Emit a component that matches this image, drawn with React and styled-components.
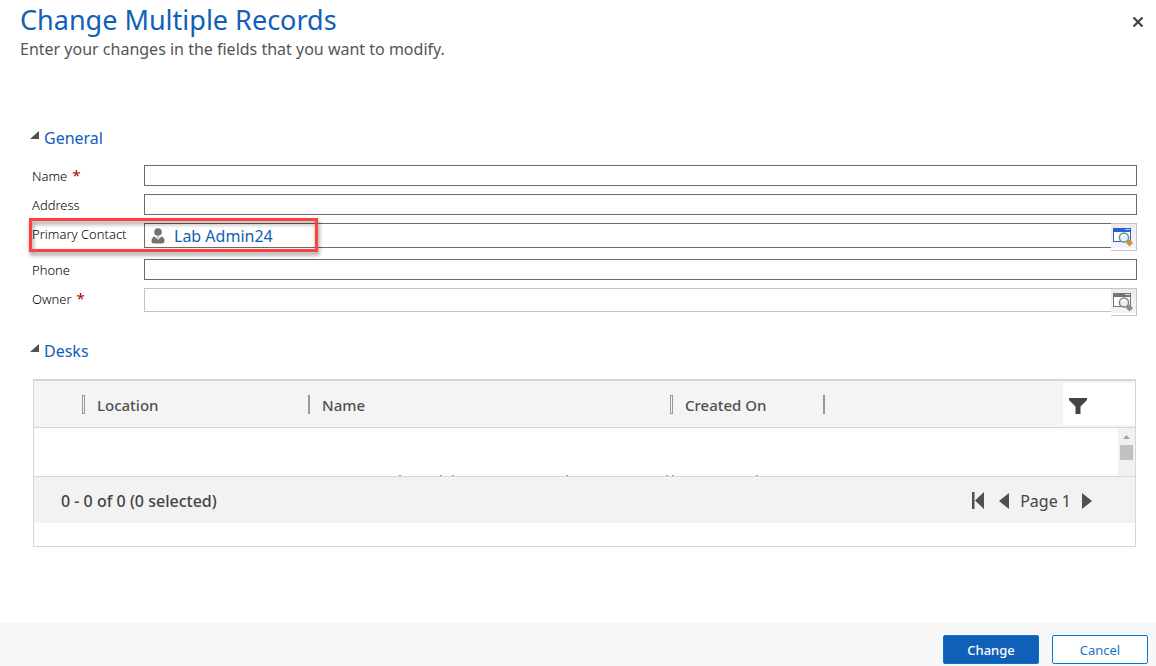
import React from "react";
import styled, { createGlobalStyle } from "styled-components";

const GlobalStyle = createGlobalStyle`
  * { box-sizing: border-box; }
  body {
    margin: 0;
    background: #fff;
    color: #444;
    font-family: "Noto Sans", "Open Sans", sans-serif;
    font-size: 13px;
  }
  button, input { font: inherit; color: inherit; }
`;

const Dialog = styled.div`
  display: flex;
  flex-direction: column;
  min-height: 100vh;
`;

const Header = styled.header`
  display: flex;
  justify-content: space-between;
  padding: 2px 8px 0 20px;
`;

const Title = styled.h1`
  margin: 0;
  color: #1160b7;
  font-size: 27px;
  font-weight: 400;
  line-height: 36px;
`;

const Subtitle = styled.p`
  margin: 0;
  color: #555;
  font-size: 16px;
  font-weight: 400;
  line-height: 22px;
`;

const IconButton = styled.button`
  display: flex;
  align-items: center;
  justify-content: center;
  width: 20px;
  height: 20px;
  padding: 0;
  border: 0;
  background: none;
`;

const CloseButton = styled(IconButton)`
  margin-top: 10px;
`;

const Content = styled.main`
  flex: 1;
  padding: 64px 19px 76px 30px;
`;

const Toggle = styled.button`
  display: flex;
  align-items: center;
  gap: 5px;
  padding: 0;
  border: 0;
  background: none;
  color: #1160b7;
  font-size: 16px;
  font-weight: 400;
  line-height: 28px;
`;

const SectionTitle = styled.h2`
  margin: 0;
  font-weight: 400;
`;

const Fields = styled.div`
  display: flex;
  flex-direction: column;
  gap: 8px;
  padding: 13px 0 21px 2px;
`;

const Field = styled.div`
  position: relative;
  display: flex;
  align-items: flex-start;
`;

const Label = styled.label`
  flex: none;
  width: 112px;
  height: 21px;
  color: #000;
  font-size: 13px;
  font-weight: 300;
  line-height: 23px;
`;

const Required = styled.span`
  margin-left: 5px;
  color: #b00000;
  font-size: 15px;
  font-weight: 400;
  line-height: 16px;
`;

const TextInput = styled.input`
  flex: 1;
  min-width: 0;
  height: 21px;
  padding: 0 4px;
  border: 1px solid #6b6b6b;
  border-radius: 0;
  background: #fff;
  outline: none;
`;

const Lookup = styled.div`
  display: flex;
  flex: 1;
  align-items: flex-start;
`;

const LookupBox = styled.div`
  display: flex;
  flex: 1;
  align-items: center;
  gap: 8px;
  height: ${(p) => (p.$muted ? 24 : 25)}px;
  padding-left: 6px;
  border: 1px solid ${(p) => (p.$muted ? "#c4c4c4" : "#6b6b6b")};
  border-right: 0;
`;

const LookupInput = styled.input`
  flex: 1;
  min-width: 0;
  height: 20px;
  padding: 0;
  border: 0;
  outline: none;
`;

const RecordLink = styled.a`
  color: #1160b7;
  font-size: 16px;
  font-weight: 400;
  line-height: 22px;
  text-decoration: none;
`;

const LookupButton = styled.button`
  display: flex;
  width: 26px;
  height: 28px;
  padding: 0;
  border: solid #c4c4c4;
  border-width: 1px 1px 1px 0;
  background: linear-gradient(#ededf0, #f3f3fb 24px, #fff 24px);
`;

const Highlight = styled.div`
  position: absolute;
  top: -5px;
  left: -3px;
  width: 289px;
  height: 34px;
  border: 3px solid #ff4040;
  filter: drop-shadow(1px 3px 2px rgba(0, 0, 0, 0.45));
  pointer-events: none;
`;

const Frame = styled.div`
  margin: 14px 1px 0 3px;
  padding-bottom: 23px;
  border: 1px solid #d6d6d6;
  border-top-width: 2px;
`;

const Grid = styled.table`
  width: 100%;
  border-collapse: collapse;
  table-layout: fixed;
  td, th { padding: 0; }
`;

const HeadRow = styled.tr`
  height: 46px;
  border-bottom: 1px solid #d6d6d6;
  background: #f4f4f4;
`;

const HeadCell = styled.th`
  width: ${(p) => (p.$width ? p.$width + "px" : "auto")};
  color: #505050;
  font-size: 15px;
  font-weight: 500;
  line-height: 20px;
  text-align: left;
`;

const HeadLabel = styled.div`
  display: flex;
  align-items: center;
  gap: 12px;
  padding-top: 2px;
`;

const Separator = styled.span`
  width: ${(p) => (p.$open ? 3 : 2)}px;
  height: 19px;
  border: 1px solid #999;
`;

const FilterSlot = styled.div`
  display: flex;
  align-items: center;
  height: 42px;
  padding: 4px 0 0 5px;
  background: #fff;
`;

const BodyRow = styled.tr`
  border-bottom: 1px solid #d6d6d6;
`;

const Viewport = styled.div`
  display: flex;
  align-items: flex-end;
  height: 48px;
`;

const Message = styled.div`
  display: flex;
  flex: 1;
  justify-content: center;
  padding-left: 4px;
`;

const ScrollTrack = styled.div`
  align-self: stretch;
  display: flex;
  flex-direction: column;
  align-items: center;
  width: 17px;
  background: #f1f1f1;
`;

const ScrollThumb = styled.div`
  width: 13px;
  height: 15px;
  background: #c1c1c1;
`;

const Pager = styled.div`
  display: flex;
  align-items: center;
  justify-content: space-between;
  height: 46px;
  padding: 2px 38px 0 27px;
  background: #f2f2f2;
  font-size: 16px;
  font-weight: 500;
`;

const PagerNav = styled.nav`
  display: flex;
  align-items: center;
  gap: 6px;
  font-weight: 400;
`;

const Footer = styled.footer`
  display: flex;
  justify-content: flex-end;
  gap: 13px;
  padding: 12px 8px 2px;
  background: #f8f8f8;
`;

const ActionButton = styled.button`
  width: 96px;
  height: 29px;
  padding: 0;
  border: 1px solid #0078d7;
  border-radius: 2px;
  background: ${(p) => (p.$primary ? "#1160b7" : "#fff")};
  color: ${(p) => (p.$primary ? "#fff" : "#1a73c9")};
  font-size: 13px;
  font-weight: ${(p) => (p.$primary ? 500 : 400)};
`;

const CollapseIcon = () => (
  <svg width="9" height="16" aria-hidden="true">
    <path d="M9 1V9H0Z" fill="#505050" />
  </svg>
);

const PersonIcon = () => (
  <svg width="15" height="17" viewBox="0 0 15 17" aria-hidden="true">
    <circle cx="7" cy="5" r="3.8" fill="#737373" />
    <path d="M0.5 14Q0.5 10.4 3.6 9.6L7 12.8L10.4 9.6Q13.5 10.4 13.5 14Q13.5 16.5 10.5 16.5H3.5Q0.5 16.5 0.5 14Z" fill="#737373" />
    <path d="M5.9 9.8H8.1L7 11.4Z" fill="#737373" />
  </svg>
);

const LookupIcon = ({ muted }) => (
  <svg width="25" height="26" viewBox="0 0 25 26" aria-hidden="true">
    <rect x="2.5" y="4.5" width="17" height="13" fill="#fff" stroke={muted ? "#777" : "#3b62b5"} />
    <rect x="2" y="4" width="18" height="4" fill={muted ? "#747474" : "#2463cf"} />
    <path d="M14 5.5H19" stroke={muted ? "#ddd" : "#a8caff"} />
    <path d="M16.5 17L19 19" stroke={muted ? "#777" : "#a66a38"} strokeWidth="2" />
    <path d="M18.5 15.5L22 19L18.5 22.5L15 19Z" fill={muted ? "#8a8a8a" : "#e08a35"} />
    <circle cx="13" cy="13.5" r="4.6" fill={muted ? "#eee" : "#e1f1fb"} stroke={muted ? "#858585" : "#6e9299"} strokeWidth="1.5" />
    <path d="M10.5 13Q11 10.8 13.5 10.8" fill="none" stroke="#fff" strokeWidth="1.4" />
  </svg>
);

const columns = [
  { name: "Location", width: 226, open: true },
  { name: "Name", width: 362, open: false },
  { name: "Created On", width: 153, open: true },
];

const textOverflow = [0, 41, 53, 167, 267, 273, 357];

function TextField({ id, label, required }) {
  return (
    <Field>
      <Label htmlFor={id}>
        {label}
        {required && <Required>*</Required>}
      </Label>
      <TextInput id={id} />
    </Field>
  );
}

export default function App() {
  return (
    <Dialog>
      <GlobalStyle />
      <Header>
        <div>
          <Title>Change Multiple Records</Title>
          <Subtitle>Enter your changes in the fields that you want to modify.</Subtitle>
        </div>
        <CloseButton aria-label="Close">
          <svg width="12" height="12" aria-hidden="true">
            <path d="M1.5 1.5L10.5 10.5M10.5 1.5L1.5 10.5" stroke="#444" strokeWidth="2.2" />
          </svg>
        </CloseButton>
      </Header>

      <Content>
        <SectionTitle>
          <Toggle aria-expanded="true"><CollapseIcon />General</Toggle>
        </SectionTitle>
        <Fields>
          <TextField id="name" label="Name" required />
          <TextField id="address" label="Address" />
          <Field>
            <Label as="span" id="contact-label">Primary Contact</Label>
            <Lookup>
              <LookupBox>
                <PersonIcon />
                <RecordLink href="#contact" aria-labelledby="contact-label contact-value">
                  <span id="contact-value">Lab Admin24</span>
                </RecordLink>
              </LookupBox>
              <LookupButton aria-label="Look up contact"><LookupIcon /></LookupButton>
            </Lookup>
            <Highlight />
          </Field>
          <TextField id="phone" label="Phone" />
          <Field>
            <Label htmlFor="owner">Owner<Required>*</Required></Label>
            <Lookup>
              <LookupBox $muted><LookupInput id="owner" /></LookupBox>
              <LookupButton aria-label="Look up owner"><LookupIcon muted /></LookupButton>
            </Lookup>
          </Field>
        </Fields>

        <SectionTitle>
          <Toggle aria-expanded="true"><CollapseIcon />Desks</Toggle>
        </SectionTitle>
        <Frame>
          <Grid>
            <thead>
              <HeadRow>
                <HeadCell as="td" $width={48} />
                {columns.map((c) => (
                  <HeadCell key={c.name} $width={c.width}>
                    <HeadLabel><Separator $open={c.open} />{c.name}</HeadLabel>
                  </HeadCell>
                ))}
                <HeadCell as="td"><HeadLabel><Separator /></HeadLabel></HeadCell>
                <HeadCell as="td" $width={72}>
                  <FilterSlot>
                    <IconButton aria-label="Filter">
                      <svg width="18" height="16" aria-hidden="true">
                        <path d="M0 0H18V2L11.5 8.5V16H6.5V8.5L0 2Z" fill="#444" />
                      </svg>
                    </IconButton>
                  </FilterSlot>
                </HeadCell>
              </HeadRow>
            </thead>
            <tbody>
              <BodyRow>
                <td colSpan={6}>
                  <Viewport>
                    <Message>
                      <svg width="359" height="1" aria-hidden="true">
                        {textOverflow.map((x) => (
                          <rect key={x} x={x} width="2" height="1" fill="#999" />
                        ))}
                      </svg>
                    </Message>
                    <ScrollTrack>
                      <svg width="17" height="17" aria-hidden="true">
                        <path d="M5 11L8.5 7L12 11Z" fill="#a3a3a3" />
                      </svg>
                      <ScrollThumb />
                    </ScrollTrack>
                  </Viewport>
                </td>
              </BodyRow>
            </tbody>
            <tfoot>
              <tr>
                <td colSpan={6}>
                  <Pager>
                    <span>0 - 0 of 0 (0 selected)</span>
                    <PagerNav aria-label="Pages">
                      <IconButton aria-label="First page">
                        <svg width="12" height="17" aria-hidden="true">
                          <path d="M0 0H2.5V17H0ZM12 0V17L3 8.5Z" fill="#505050" />
                        </svg>
                      </IconButton>
                      <IconButton aria-label="Previous page">
                        <svg width="10" height="16" aria-hidden="true">
                          <path d="M10 0V16L0 8Z" fill="#505050" />
                        </svg>
                      </IconButton>
                      <span>Page 1</span>
                      <IconButton aria-label="Next page">
                        <svg width="10" height="16" aria-hidden="true">
                          <path d="M0 0V16L10 8Z" fill="#505050" />
                        </svg>
                      </IconButton>
                    </PagerNav>
                  </Pager>
                </td>
              </tr>
            </tfoot>
          </Grid>
        </Frame>
      </Content>

      <Footer>
        <ActionButton $primary>Change</ActionButton>
        <ActionButton>Cancel</ActionButton>
      </Footer>
    </Dialog>
  );
}
